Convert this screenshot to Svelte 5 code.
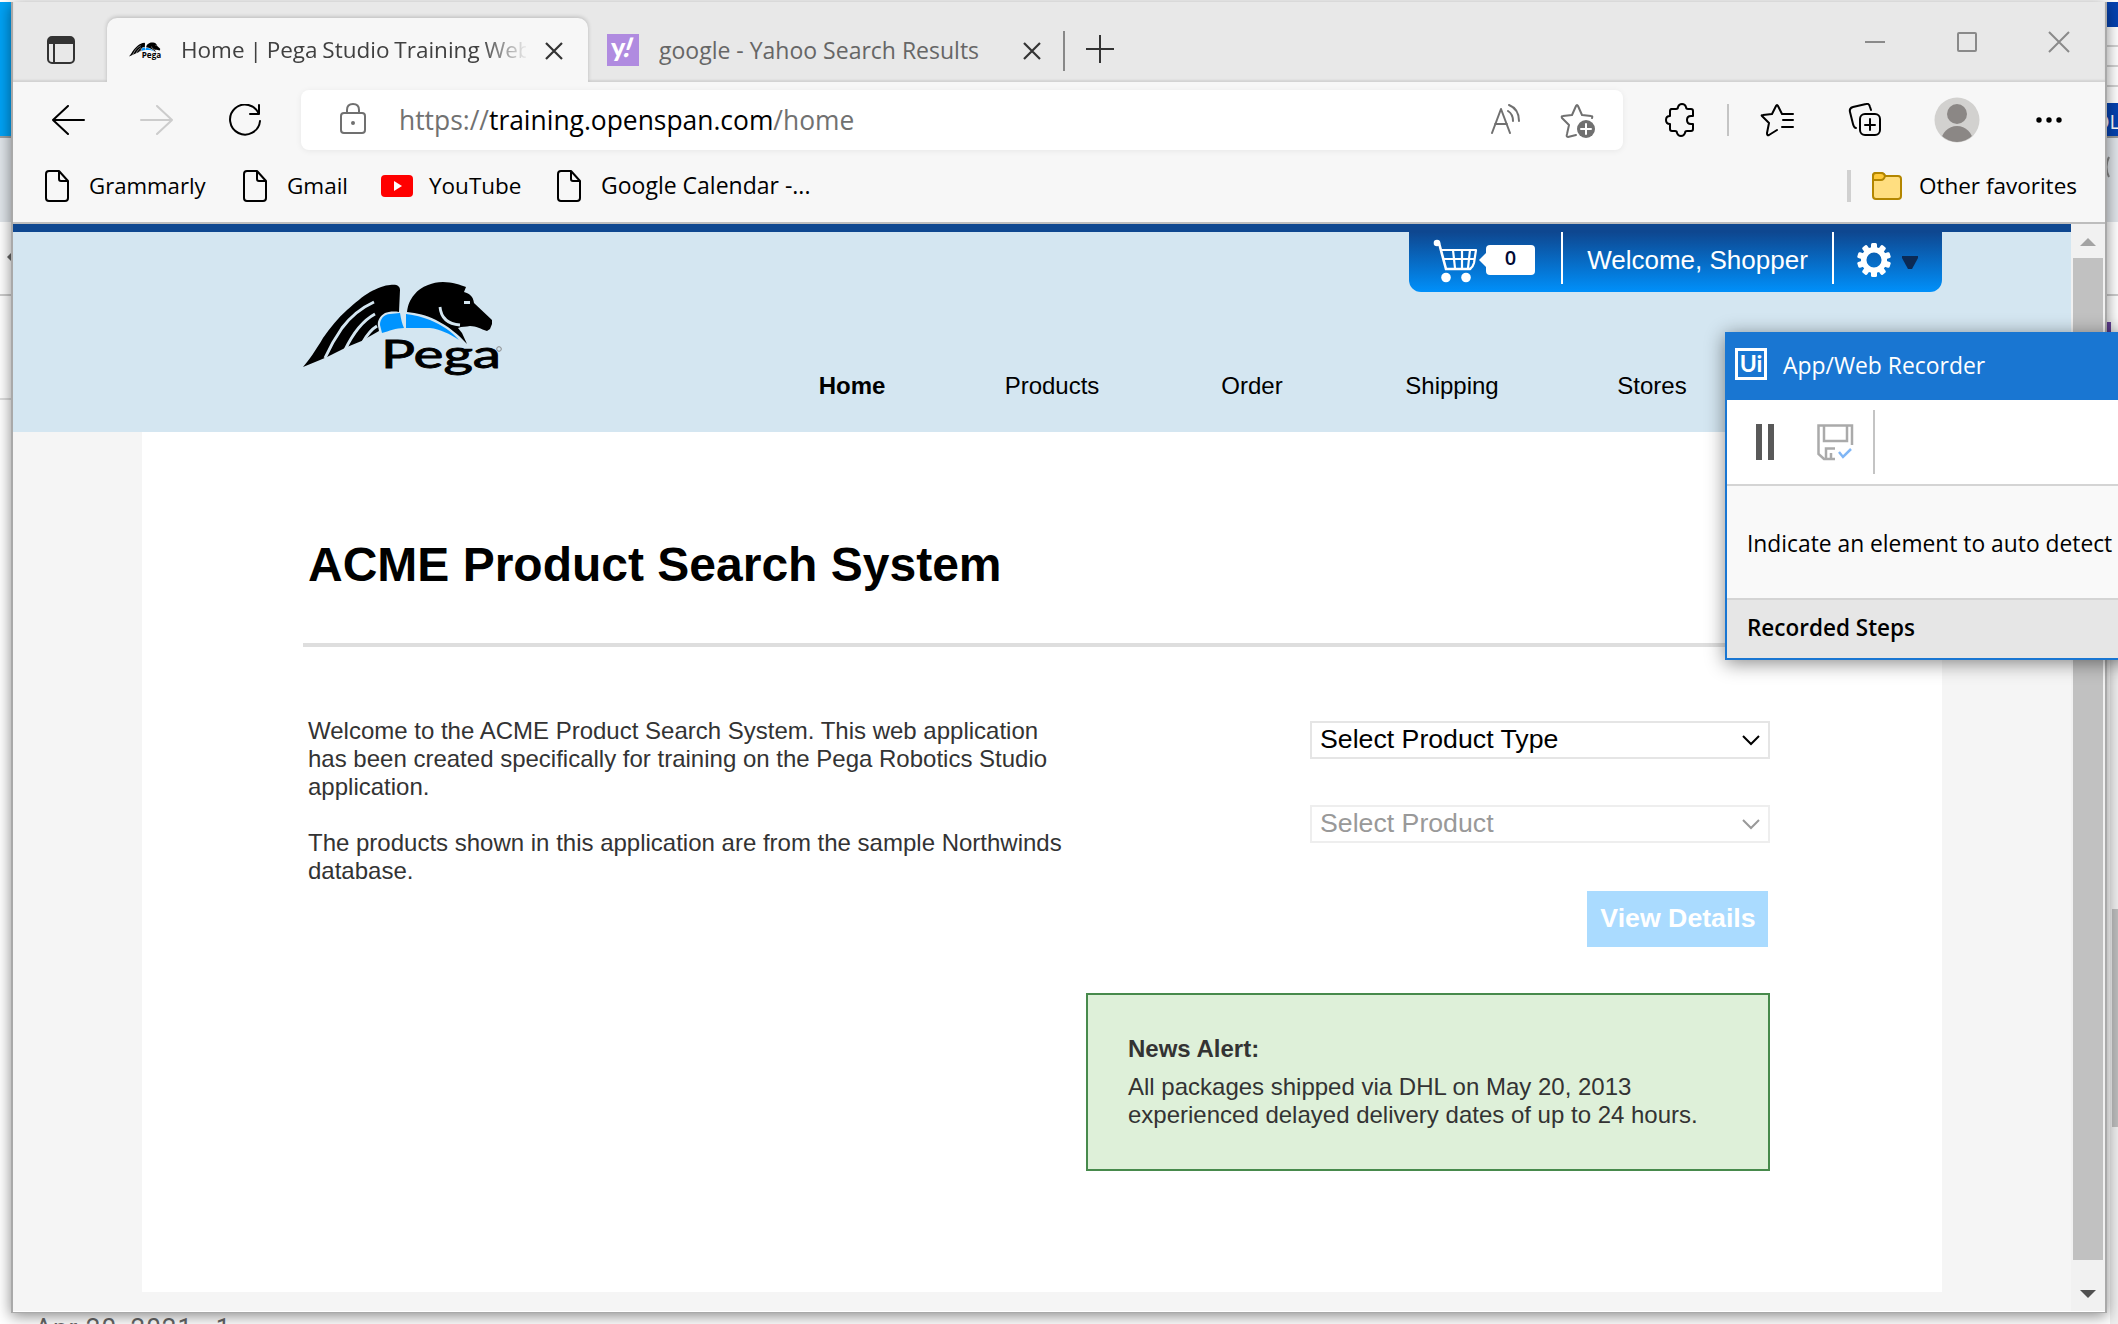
<script>
  const bookmarks = [
    { label: 'Grammarly', cls: 'b1' },
    { label: 'Gmail', cls: 'b2' },
    { label: 'YouTube', cls: 'b3', video: true },
    { label: 'Google Calendar -...', cls: 'b4' }
  ];
  const nav = ['Home', 'Products', 'Order', 'Shipping', 'Stores'];
  const teeth = Array.from({ length: 10 }, (_, i) => i * 36);
</script>

{#snippet pegaMark(gap)}
  <path fill="#000" d="M0 85C6 78 13 68 20 56C27 46 35 36 44 28C52 21 60 14 67 10C75 6 82 3 87 3C94 2 97 4 97 8L96 30C90 29 85 30 82 31C77 34 74 39 75 44L76 49L62 57L61 58L44 65L24 75L17 78Z" />
  <path fill="none" stroke={gap} stroke-width="3" d="M71 20C58 26 48 34 39 46C32 56 27 65 22 76M72 32C61 38 51 49 42 68M74 44C69 47 65 51 60 60" />
  <path fill="#0094ff" d="M77 43C77 37 81 32 87 32L97 31C98 37 99 42 101 46C93 46 86 49 79 51ZM103 32C112 33 119 35 127 38C139 43 148 49 156 58C147 52 137 47 127 46L103 46Z" />
  <path fill="#000" d="M104 30C105 22 107 18 111 13C115 8 119 5 125 3C130 1 134 0 140 0C149 0 158 3 163 5L161 10C167 12 170 14 171 21L189 38V42L187 47L184 49C178 47 173 44 167 44C163 45 159 44 155 46L159 51L164 62C156 53 145 44 133 38C123 33 114 31 104 30Z" />
  <path fill="none" stroke={gap} stroke-width="2.8" d="M137 25C138 36 145 42 157 43" />
  <path fill={gap} d="M161 19H167V22H161Z" />
{/snippet}

<div class="desktop">
  <div class="behind left">
    <div class="sky"></div><div class="greyband"></div><div class="paper"><svg width="13" height="20" viewBox="0 0 13 20"><path d="M7 10L13 4V16Z" fill="#666" /></svg></div><div class="paper low"></div>
  </div>
  <div class="behind right">
    <div class="navy one"></div><div class="lines"></div><div class="navy two"><span>OL</span></div>
    <div class="greyband"><svg width="8" height="22" viewBox="0 0 8 22"><path d="M3 1Q-2 11 3 21" fill="none" stroke="#888" stroke-width="2" /></svg></div>
    <div class="paper"></div><div class="purple"></div><div class="track"><div class="thumb"></div></div>
  </div>
  <div class="stray">Apr 20, 2021 · 1</div>

  <main class="window">
    <header class="tabstrip">
      <svg class="tabmenu" width="28" height="28" viewBox="0 0 28 28"><rect x="1" y="1" width="26" height="26" rx="4" fill="none" stroke="#333" stroke-width="2" /><path d="M1 8V5Q1 1 5 1H23Q27 1 27 5V8ZM6 8H8V27H6Z" fill="#333" /></svg>
      <div class="tab active">
        <svg class="fav" width="33" height="20" viewBox="0 0 200 104">{@render pegaMark('#f7f7f7')}<text x="77" y="92" font-size="54" font-weight="bold" textLength="118" lengthAdjust="spacingAndGlyphs">Pega</text></svg>
        <span class="title">Home | Pega Studio Training Web</span>
        <svg class="x" width="18" height="18" viewBox="0 0 18 18"><path d="M1 1L17 17M17 1L1 17" stroke="#333" stroke-width="2.2" /></svg>
      </div>
      <div class="tab">
        <div class="yahoo">y<i>!</i></div>
        <span class="title dim">google - Yahoo Search Results</span>
        <svg class="x" width="18" height="18" viewBox="0 0 18 18"><path d="M1 1L17 17M17 1L1 17" stroke="#333" stroke-width="2.2" /></svg>
      </div>
      <span class="tabsep"></span>
      <svg class="plus" width="28" height="28" viewBox="0 0 28 28"><path d="M0 14H28M14 0V28" stroke="#333" stroke-width="2" /></svg>
      <div class="controls">
        <svg width="22" height="22" viewBox="0 0 22 22"><path d="M1 11H21" /></svg>
        <svg width="22" height="22" viewBox="0 0 22 22"><rect x="2" y="2" width="18" height="18" rx="1" /></svg>
        <svg width="22" height="22" viewBox="0 0 22 22"><path d="M1 1L21 21M21 1L1 21" /></svg>
      </div>
    </header>

    <section class="toolbar">
      <svg class="ic back" width="34" height="30" viewBox="0 0 34 30"><path d="M17 1L2 15L17 29M2 15H33" /></svg>
      <svg class="ic forward" width="34" height="30" viewBox="0 0 34 30"><path d="M17 1L32 15L17 29M32 15H1" /></svg>
      <svg class="ic refresh" width="34" height="34" viewBox="0 0 34 34"><path d="M31 10A15 15 0 1 0 32 17M31 1V10H22" /></svg>
      <div class="address">
        <svg class="ic grey lock" width="26" height="32" viewBox="0 0 26 32"><rect x="1" y="10" width="24" height="20" rx="3" /><path d="M7 10V7Q7 1 13 1Q19 1 19 7V10" /><circle cx="13" cy="20" r="1" /></svg>
        <span class="url">https://<b>training.openspan.com</b>/home</span>
        <svg class="ic grey aloud" width="32" height="30" viewBox="0 0 32 30"><path d="M2 29L11 5L20 29M5 20H17M18 7Q23 10 23 17M19 1Q29 5 29 17" /></svg>
        <svg class="ic grey addfav" width="36" height="36" viewBox="0 0 36 36"><path d="M16 32L8 34Q6 34 7 31L9 22L2 15Q1 13 3 13L12 12L16 3Q17 1 18 3L22 12L31 13Q33 13 32 15" /><circle cx="26" cy="26" r="9" fill="#707070" stroke="none" /><path d="M26 21V31M21 26H31" stroke="#fff" /></svg>
      </div>
      <svg class="ic puzzle" width="34" height="34" viewBox="0 0 34 34"><path d="M7 6H12Q14 6 14 4Q15 1 18 1Q21 1 22 4Q22 6 24 6H27Q29 6 29 8V13H27Q23 13 23 17Q23 21 27 21H29V26Q29 28 27 28H23Q21 28 21 30Q20 33 17 33Q14 33 13 30Q13 28 11 28H8Q6 28 6 26V21Q2 21 2 17Q2 13 6 13V8Q6 6 8 6Z" /></svg>
      <span class="toolsep"></span>
      <svg class="ic favs" width="34" height="34" viewBox="0 0 34 34"><path d="M17 27L9 32Q7 33 7 30L9 20L2 13Q1 12 3 12L12 11L16 3Q17 1 18 3L22 11H33M23 17H33M22 24H33" /></svg>
      <svg class="ic coll" width="34" height="34" viewBox="0 0 34 34"><rect x="12" y="11" width="20" height="21" rx="5" /><path d="M22 16V27M17 22H27M8 25Q6 25 5 21L2 9Q1 5 5 4L18 1Q21 0 22 4L23 7" /></svg>
      <svg class="avatar" width="46" height="46" viewBox="0 0 46 46"><defs><clipPath id="face"><circle cx="23" cy="23" r="22" /></clipPath></defs><circle cx="23" cy="23" r="22.5" fill="#d2d1cf" /><g fill="#8b8785" clip-path="url(#face)"><circle cx="23" cy="17" r="10" /><circle cx="23" cy="45" r="16" /></g></svg>
      <svg class="dots" width="28" height="8" viewBox="0 0 28 8"><circle cx="4" cy="4" r="2.7" /><circle cx="14" cy="4" r="2.7" /><circle cx="24" cy="4" r="2.7" /></svg>
    </section>

    <section class="bookmarks">
      {#each bookmarks as b}
        <div class="bm {b.cls}">
          {#if b.video}
            <svg width="32" height="22" viewBox="0 0 32 22"><rect width="32" height="22" rx="4" fill="#f00" /><path d="M13 6L21 11L13 16Z" fill="#fff" /></svg>
          {:else}
            <svg class="ic" width="24" height="32" viewBox="0 0 24 32"><path d="M4 1H14L23 11V28Q23 31 20 31H4Q1 31 1 28V4Q1 1 4 1ZM14 1V9Q14 11 16 11H23" /></svg>
          {/if}
          <span>{b.label}</span>
        </div>
      {/each}
      <div class="others">
        <svg width="32" height="30" viewBox="0 0 32 30"><path d="M2 5Q2 2 5 2H10Q13 2 14 5H27Q30 5 30 8V25Q30 28 27 28H5Q2 28 2 25Z" fill="#ffde80" stroke="#b38600" stroke-width="2" /><path d="M2 9V5Q2 2 5 2H10Q13 2 14 5Q13 9 10 9Z" fill="#ffc938" stroke="#b38600" stroke-width="2" /></svg>
        <span>Other favorites</span>
      </div>
    </section>

    <div class="viewport">
      <div class="page">
        <div class="banner">
          <div class="brandrow">
            <svg class="logo" width="202" height="96" viewBox="0 0 202 96">{@render pegaMark('#d4e6f1')}<text class="wordmark" x="78" y="86" textLength="120" lengthAdjust="spacingAndGlyphs">Pega</text><circle cx="196" cy="67" r="2.3" fill="none" stroke="#888" /></svg>
            <div class="account">
              <div class="cart">
                <svg width="45" height="44" viewBox="0 0 45 44"><path d="M6 4L13 30H37" fill="none" stroke="#fff" stroke-width="2.6" stroke-linecap="round" /><circle cx="4" cy="4" r="3.3" fill="#fff" /><path d="M9 11H43L41 24Q40 28 37 30M20 11L22 29M29 11V29M37 11L35 29M11 20H41" fill="none" stroke="#fff" stroke-width="2.2" stroke-linejoin="round" /><circle cx="13" cy="38.500" r="4.8" fill="#fff" /><circle cx="33" cy="38.500" r="4.8" fill="#fff" /></svg>
                <div class="count">0</div>
              </div>
              <div class="hello">Welcome, Shopper</div>
              <div class="gear">
                <svg width="34" height="34" viewBox="-17 -17 34 34"><circle r="10.3" fill="none" stroke="#fff" stroke-width="5.5" />{#each teeth as a}<rect x="-3" y="-17" width="6" height="7" rx="1.5" fill="#fff" transform="rotate({a})" />{/each}</svg>
                <svg class="tri" width="16" height="14" viewBox="0 0 16 14"><path d="M0 0H16V2L10 13H6L0 2Z" fill="#0b2a55" /></svg>
              </div>
            </div>
          </div>
          <nav>{#each nav as item, i}<span class:current={i === 0}>{item}</span>{/each}</nav>
        </div>
        <div class="sheet">
          <h1>ACME Product Search System</h1>
          <hr />
          <div class="columns">
            <div class="copy">
              <p>Welcome to the ACME Product Search System. This web application<br />has been created specifically for training on the Pega Robotics Studio<br />application.</p>
              <p>The products shown in this application are from the sample Northwinds<br />database.</p>
            </div>
            <div class="form">
              <div class="select">Select Product Type<svg width="20" height="14" viewBox="0 0 20 14"><path d="M2 2L10 10L18 2" fill="none" stroke="currentColor" stroke-width="2" /></svg></div>
              <div class="select off">Select Product<svg width="20" height="14" viewBox="0 0 20 14"><path d="M2 2L10 10L18 2" fill="none" stroke="currentColor" stroke-width="2" /></svg></div>
              <div class="button">View Details</div>
              <div class="alert"><strong>News Alert:</strong><p>All packages shipped via DHL on May 20, 2013<br />experienced delayed delivery dates of up to 24 hours.</p></div>
            </div>
          </div>
        </div>
      </div>
      <div class="scrollbar">
        <svg width="16" height="8" viewBox="0 0 16 8"><path d="M0 8L8 0L16 8Z" fill="#a3a3a3" /></svg>
        <div class="grip"></div>
        <svg width="16" height="8" viewBox="0 0 16 8"><path d="M0 0H16L8 8Z" fill="#505050" /></svg>
      </div>
    </div>
  </main>

  <aside class="recorder">
    <header><div class="ui">Ui</div><span>App/Web Recorder</span></header>
    <div class="actions">
      <svg class="pause" width="18" height="36" viewBox="0 0 18 36"><path d="M0 0H6V36H0ZM12 0H18V36H12Z" fill="#595959" /></svg>
      <svg class="save" width="37" height="37" viewBox="0 0 37 37"><g fill="none" stroke="#aaa" stroke-width="2.5"><path d="M18 35H7L1.5 30V1.5H35V21" /><path d="M7 2V17H30V2M9 35V24.500H18M14 34V29" /></g><path d="M22 28L26 33L34 25" fill="none" stroke="#80b6f5" stroke-width="2.5" /></svg>
      <span></span>
    </div>
    <div class="hint">Indicate an element to auto detect</div>
    <div class="steps">Recorded Steps</div>
  </aside>
</div>

<style>
  :global(body) { margin: 0; overflow: hidden; }
  * { box-sizing: border-box; }
  svg { flex: none; display: block; }
  .desktop { position: relative; width: 2118px; height: 1324px; overflow: hidden; background: #fff; font-family: 'Open Sans', 'Noto Sans', sans-serif; font-size: 22.5px; white-space: nowrap; }
  .behind { position: absolute; top: 2px; bottom: 0; display: flex; flex-direction: column; }
  .left { left: 0; width: 13px; }
  .right { right: 0; width: 12px; }
  .sky { height: 136px; background: #00a2f5; border-bottom: 2px solid #9a9fa2; }
  .greyband { height: 84px; background: #e0e5ea; padding-top: 18px; }
  .paper { height: 74px; background: #fff; border-bottom: 2px solid #ccc; padding-top: 25px; }
  .low { height: 104px; padding: 0; border-color: #ddd; }
  .navy { background: #0542b0; }
  .one { height: 25px; }
  .lines { height: 76px; background: repeating-linear-gradient(#fff 0 18px, #d2d2d2 18px 20px); }
  .two { height: 35px; border-bottom: 2px solid #999; overflow: hidden; color: #fff; font-size: 20px; line-height: 38px; }
  .two span { margin-left: -12px; }
  .purple { width: 5px; height: 12px; margin-top: 26px; background: #6b45a4; }
  .track { flex: 1; margin-left: 4px; padding: 575px 0 0 2px; background: #eee; }
  .thumb { height: 218px; background: #bcbcbc; }
  .stray { position: absolute; left: 35px; top: 1313px; color: #666; font: 26px/30px Roboto, sans-serif; letter-spacing: 1px; }

  .window { position: absolute; left: 11px; top: 2px; width: 2096px; height: 1311px; border: 2px solid #a9a9a9; border-top: 0; border-bottom-width: 1px; background: #f7f7f7; box-shadow: 0 3px 14px #0007; display: flex; flex-direction: column; }
  .tabstrip { display: flex; height: 80px; background: #e8e8e8; padding-top: 16px; box-shadow: inset 0 -2px 2px #d2d2d2; }
  .tabmenu { margin: 18px 32px 0 34px; }
  .tab { display: flex; align-items: center; height: 64px; padding-bottom: 0; width: 474px; }
  .tab.active { background: #f7f7f7; border-radius: 10px 10px 0 0; width: 481px; box-shadow: 0 -1px 4px #0003; clip-path: inset(-6px -6px 0 -6px); }
  .fav { margin: 2px 0 0 22px; }
  .title { color: #404040; margin: 0 0 0 19px; width: 345px; overflow: hidden; line-height: 36px; word-spacing: -1px; }
  .active .title { mask: linear-gradient(90deg, #000 300px, transparent 348px); }
  .dim { color: #666; width: 364px; margin-left: 20px; font-size: 23px; word-spacing: 0; }
  .tab .x { margin: 2px 25px 0 auto; }
  .tab + .tab .x { margin-right: 21px; }
  .yahoo { width: 32px; height: 32px; margin-left: 19px; background: #b08be0; color: #fff; font: 900 27px/25px Lato, sans-serif; padding-left: 4px; }
  .yahoo i { display: inline-block; transform: skewX(-12deg); }
  .tabsep { width: 2px; height: 40px; margin: 13px 21px 0 1px; background: #888; }
  .plus { margin-top: 17px; }
  .controls { display: flex; gap: 70px; margin: 13px 35px 0 auto; fill: none; stroke: #8a8a8a; stroke-width: 2; }

  .toolbar { height: 76px; display: flex; align-items: center; }
  .ic { fill: none; stroke: #000; stroke-width: 2; stroke-linejoin: round; stroke-linecap: round; }
  .grey { stroke: #707070; }
  .back { margin: -1px 0 0 38px; }
  .forward { margin: -1px 0 0 55px; stroke: #ccc; }
  .refresh { margin: 1px 39px 0 54px; }
  .address { display: flex; align-items: center; width: 1322px; height: 60px; background: #fff; border-radius: 8px; box-shadow: 0 1px 6px #0001; }
  .lock { margin-left: 39px; margin-top: -2px; }
  .url { font-size: 26.4px; color: #717171; margin-left: 33px; width: 1091px; }
  .url b { font-weight: 400; color: #000; }
  .aloud { margin-top: -3px; }
  .addfav { margin-left: 38px; margin-top: 2px; }
  .puzzle { margin-left: 41px; }
  .toolsep { width: 2px; height: 32px; background: #c4c4c4; margin: 0 31px 0 29px; }
  .coll { margin-left: 54px; }
  .avatar { margin-left: 52px; }
  .dots { margin-left: 55px; }
  .bookmarks { display: flex; align-items: center; height: 64px; padding-bottom: 8px; }
  .bm, .others { display: flex; align-items: center; height: 32px; }
  .bm span, .others span { margin-top: -2px; }
  .bm { gap: 20px; }
  .b1 { margin-left: 32px; width: 198px; font-size: 22.2px; }
  .b2 { width: 138px; }
  .b3 { width: 176px; gap: 16px; }
  .b4 { font-size: 23px; }
  .others { margin-left: auto; margin-right: 28px; padding-left: 20px; gap: 16px; border-left: 4px solid #d0d0d0; }

  .viewport { flex: 1; display: flex; border-top: 2px solid #bdbdbd; border-bottom: 1px solid #fff; font-family: 'Liberation Sans', sans-serif; min-height: 0; }
  .page { width: 2058px; background: #f5f5f5; }
  .banner { height: 208px; border-top: 8px solid #0e4790; background: #d4e6f1; }
  .brandrow { display: flex; justify-content: space-between; height: 130px; padding: 0 129px 0 290px; }
  .logo { margin-top: 50px; }
  .wordmark { font: 39px Lato, sans-serif; stroke: #000; stroke-width: .9; }
  .account { display: flex; width: 533px; height: 60px; background: linear-gradient(#0e4790, #0090fa); border-radius: 0 0 12px 12px; color: #fff; font-size: 26px; }
  .cart { width: 154px; height: 52px; padding: 7px 0 0 24px; display: flex; border-right: 2px solid #fff; }
  .count { margin: 6px 0 0 8px; width: 49px; height: 30px; border-radius: 4px; background: #fff; color: #000a35; font: 600 20px/26px 'Open Sans', sans-serif; text-align: center; position: relative; }
  .count::before { content: ''; position: absolute; left: -7px; top: 8px; border: 7px solid transparent; border-left: 0; border-right-color: #fff; }
  .hello { width: 271px; height: 52px; border-right: 2px solid #fff; line-height: 56px; text-align: center; }
  .gear { display: flex; padding: 11px 0 0 23px; }
  .tri { margin: 13px 0 0 11px; }
  nav { display: flex; margin-left: 739px; font-size: 24px; line-height: 48px; color: #000; }
  nav span { width: 200px; text-align: center; }
  .current { font-weight: 700; }
  .sheet { width: 1800px; height: 860px; margin-left: 129px; background: #fff; padding: 104px 172px 0 160px; color: #333; font-size: 24px; line-height: 28px; }
  h1 { margin: 0 0 0 6px; font-size: 48px; line-height: 58px; color: #000; }
  hr { border: 0; height: 4px; background: #dedede; margin: 49px 0 74px 1px; }
  .columns { display: flex; justify-content: space-between; }
  .copy { margin: -4px 0 0 6px; }
  p { margin: 0 0 28px; }
  .form { width: 684px; display: flex; flex-direction: column; align-items: flex-end; }
  .select { width: 460px; height: 38px; border: 2px solid #e5e5e5; color: #000; font-size: 26.7px; display: flex; align-items: center; justify-content: space-between; padding: 0 7px 3px 8px; margin-bottom: 46px; }
  .select svg { margin-top: 4px; }
  .off { color: #999; border-color: #eee; margin-bottom: 48px; }
  .button { width: 181px; height: 56px; margin-right: 2px; background: #aadbff; color: #fff; font-weight: 700; font-size: 26.7px; line-height: 55px; text-align: center; padding-left: 1px; }
  .alert { width: 684px; height: 178px; border: 2px solid #478a4c; background: #def0d9; margin-top: 46px; padding: 40px; }
  .alert p { margin-top: 10px; }
  .scrollbar { width: 34px; background: #f1f1f1; display: flex; flex-direction: column; align-items: center; justify-content: space-between; padding: 14px 0 13px; }
  .grip { width: 30px; height: 1002px; margin-bottom: 18px; background: #c1c1c1; }

  .recorder { position: absolute; left: 1725px; top: 332px; width: 440px; height: 328px; border: 2px solid #1976d2; background: #fff; box-shadow: 0 3px 18px #0007; display: flex; flex-direction: column; }
  .recorder header { height: 66px; background: #1976d2; display: flex; align-items: center; color: #fff; padding: 0 0 4px 8px; }
  .ui { width: 32px; height: 32px; margin-top: -2px; border: 3px solid #fff; font: 700 23px/25px Lato, sans-serif; text-align: center; }
  .recorder header span { margin-left: 16px; font-size: 22.9px; }
  .actions { height: 86px; border-bottom: 2px solid #d4d4d4; display: flex; align-items: center; }
  .pause { margin-left: 29px; }
  .save { margin-left: 43px; }
  .actions span { width: 2px; height: 64px; margin-left: 19px; background: #c4c4c4; }
  .hint { height: 114px; background: #f9f9f9; border-bottom: 2px solid #d4d4d4; padding-left: 20px; line-height: 115px; color: #000; font-size: 22.8px; }
  .steps { height: 58px; background: #e6e6e6; padding-left: 20px; line-height: 55px; font-weight: 600; color: #000; }
</style>
